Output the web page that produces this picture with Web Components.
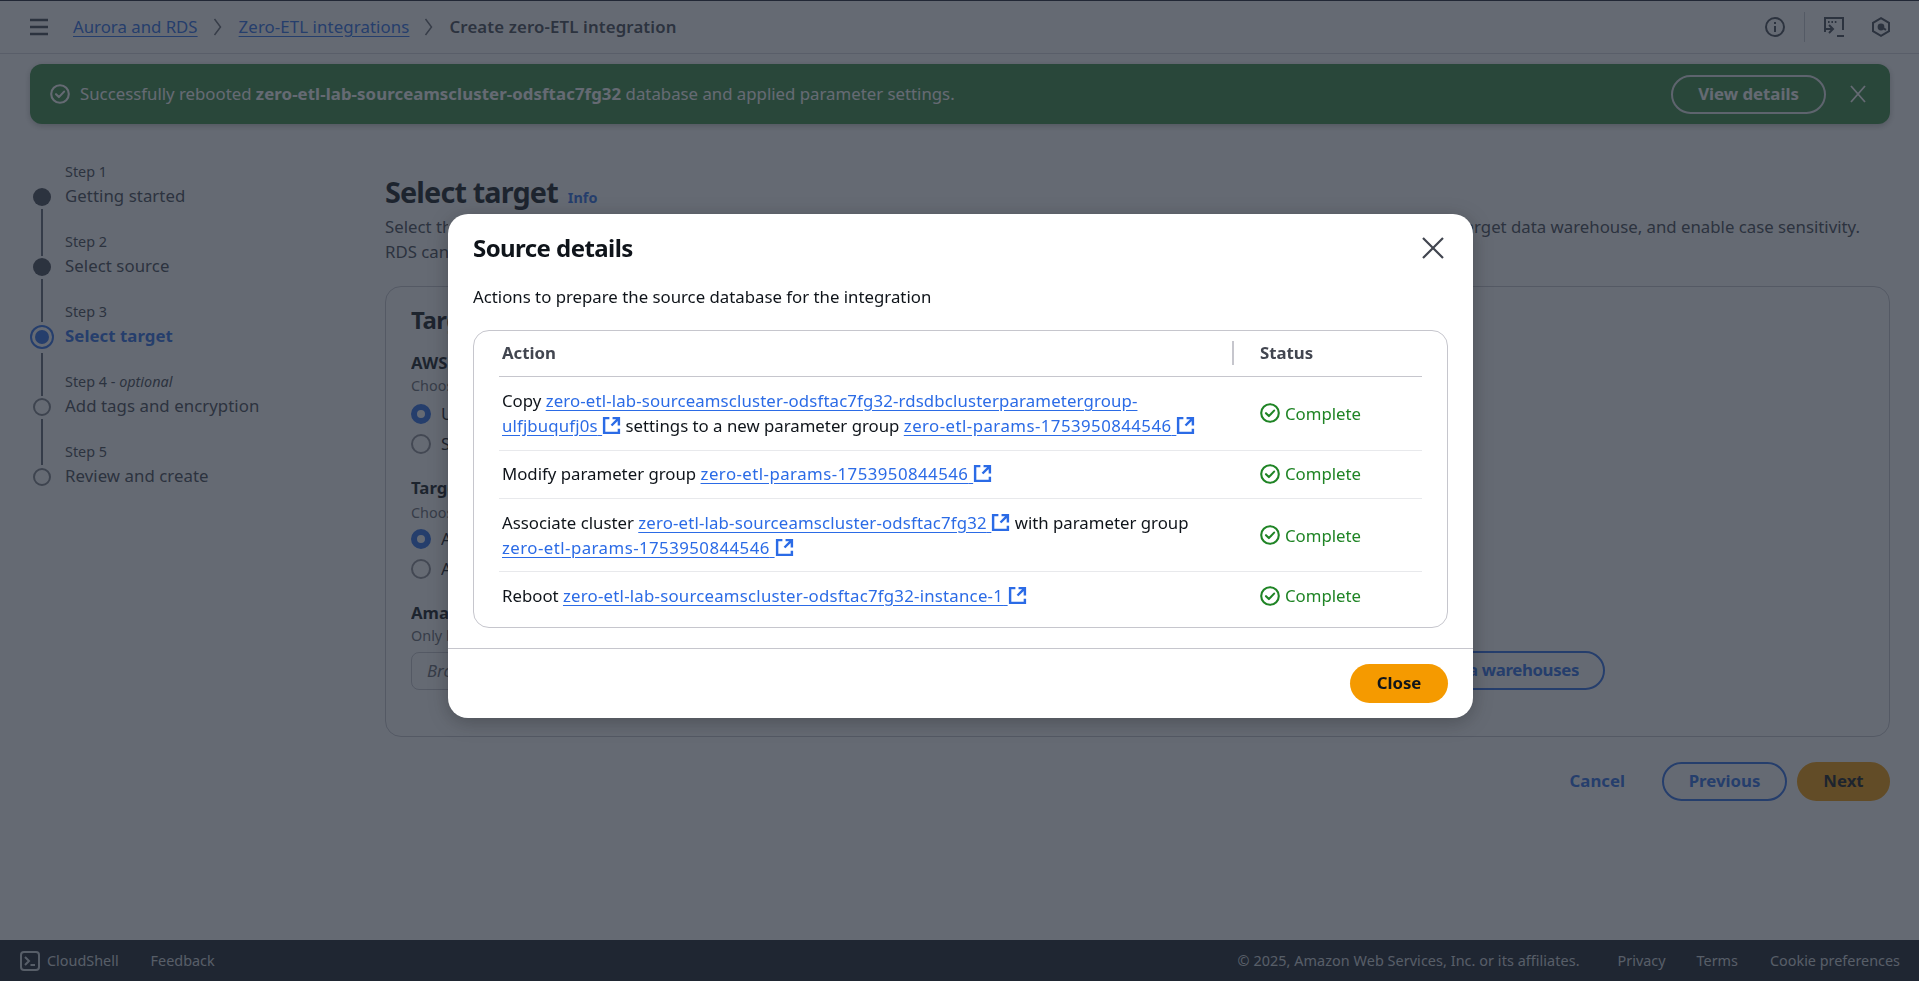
<!DOCTYPE html>
<html lang="en"><head><meta charset="utf-8"><title>Create zero-ETL integration</title>
<style>
html,body{margin:0;height:100%;overflow:hidden;background:#fff;font:16.8px/24px "Noto Sans","Liberation Sans",sans-serif;color:#0f141a}
body{display:flex;flex-direction:column;height:981px}
</style></head><body>
<top-bar></top-bar>
<flash-bar></flash-bar>
<page-main></page-main>
<page-footer></page-footer>
<modal-layer>
 <source-modal>
  <src-row first>Copy <ext-link style="letter-spacing:.14px">zero-etl-lab-sourceamscluster-odsftac7fg32-rdsdbclusterparametergroup-ulfjbuqufj0s</ext-link> settings to a new parameter group <ext-link style="letter-spacing:.46px">zero-etl-params-1753950844546</ext-link></src-row>
  <src-row second>Modify parameter group <ext-link style="letter-spacing:.46px">zero-etl-params-1753950844546</ext-link></src-row>
  <src-row>Associate cluster <ext-link style="letter-spacing:.17px">zero-etl-lab-sourceamscluster-odsftac7fg32</ext-link> with parameter group <ext-link style="letter-spacing:.46px">zero-etl-params-1753950844546</ext-link></src-row>
  <src-row last>Reboot <ext-link style="letter-spacing:.23px">zero-etl-lab-sourceamscluster-odsftac7fg32-instance-1</ext-link></src-row>
 </source-modal>
</modal-layer>
<script>
const LINK='#2b6be6';
function el(name,html){customElements.define(name,class extends HTMLElement{constructor(){super();this.attachShadow({mode:'open'}).innerHTML=html}})}
const check=(c,s=20)=>`<svg width="${s}" height="${s}" viewBox="0 0 20 20" fill="none" stroke="${c}" stroke-width="2.1" style="display:block;flex:none"><circle cx="10" cy="10" r="8.8"/><path d="M6 10.200l2.900 2.900 5.200-5.500" stroke-linecap="round" stroke-linejoin="round"/></svg>`;

el('top-bar',`<style>
:host{display:flex;align-items:center;height:52px;border-top:1px solid #1b2130;border-bottom:1px solid #d5d8dd;padding-left:30px;padding-right:28px;flex:none}
a{color:${LINK};text-decoration:underline;text-underline-offset:3px}
.ch{display:block;flex:none;margin:0 15px}
b{color:#424650;font-weight:600;letter-spacing:.14px}
.sp{flex:1}
svg{display:block;flex:none}
.d{width:1px;height:30px;background:#c6c9cf;margin:0 19px 0 19px}
</style>
<svg width="18" height="18" viewBox="0 0 18 18" stroke="#424650" stroke-width="2.400" style="margin-right:25px"><path d="M0 2h18M0 9h18M0 16h18"/></svg>
<a>Aurora and RDS</a>
<svg class="ch" width="10" height="20" viewBox="0 0 10 20" fill="none" stroke="#656871" stroke-width="1.500" style="margin-right:16px"><path d="M1.500 2l6 8-6 8"/></svg>
<a style="letter-spacing:.11px">Zero-ETL integrations</a>
<svg class="ch" width="10" height="20" viewBox="0 0 10 20" fill="none" stroke="#656871" stroke-width="1.500"><path d="M1.500 2l6 8-6 8"/></svg>
<b>Create zero-ETL integration</b>
<span class="sp"></span>
<svg width="20" height="20" viewBox="0 0 20 20" fill="none" stroke="#424650" stroke-width="2"><circle cx="10" cy="10" r="9"/><path d="M10 9v6M10 5v2"/></svg>
<span class="d"></span>
<svg width="21" height="21" viewBox="0 0 21 21" fill="none" stroke="#424650" stroke-width="2"><path d="M1 15V1h18v12"/><path d="M4 5h1.600M7.400 5H9M10.800 5h1.600" stroke-width="1.800"/><path d="M5 8l4 4-4 4M1 12h8M13 19h7"/></svg>
<svg width="20" height="20" viewBox="0 0 20 20" fill="none" stroke="#424650" stroke-width="2" style="margin-left:26px"><path d="M10 1.200l8 4.600v8.400l-8 4.600-8-4.600V5.800z"/><circle cx="10" cy="10" r="3.400" fill="#424650" stroke="none"/><path d="M10 10l5 2.800"/></svg>`);

el('flash-bar',`<style>
:host{display:flex;align-items:center;height:60px;margin:10px 29px 0 30px;background:#378941;border-radius:12px;color:#fff;flex:none;padding:0 20px 0 20px;box-shadow:0 2px 6px rgba(0,0,0,.25)}
span{margin-left:10px;flex:1;white-space:nowrap}
b{font-weight:700;letter-spacing:.09px}
.btn{box-sizing:border-box;width:155px;height:39px;border:2px solid #e8eaed;border-radius:20px;text-align:center;line-height:34px;font-weight:700;margin:0 23px 0 0;flex:none}
</style>${check('#fff',20)}<span>Successfully rebooted <b>zero-etl-lab-sourceamscluster-odsftac7fg32</b> database and applied parameter settings.</span>
<div class="btn">View details</div>
<svg width="18" height="18" viewBox="0 0 18 18" stroke="#fff" stroke-width="1.800" style="display:block;margin-right:3px;flex:none"><path d="M2 1l14 16M16 1L2 17"/></svg>`);

el('wiz-step',`<style>
:host{display:grid;grid-template-columns:32px 1fr;grid-template-rows:22px 24px;align-content:start;height:70px;position:relative;color:#424650}
.l{grid-column:2;height:20px;line-height:20px;font-size:14.4px;color:#424650}
.m{grid-column:1;display:flex;align-items:center;height:24px}
.m i{display:block;box-sizing:border-box;width:18px;height:18px;border-radius:50%;background:#424650;flex:none;margin-top:2px}
.n{grid-column:2;height:24px;line-height:24px;letter-spacing:.06px}
:host(.next) .m i{background:transparent;border:2px solid #7d8088}
:host(.active) .n{color:${LINK};font-weight:700}
:host(.active) .m i{background:${LINK};width:14px;height:14px;margin-left:2px;box-shadow:0 0 0 3px #fff,0 0 0 5px ${LINK}}
:host(:not(.last))::after{content:"";position:absolute;left:8px;top:47px;width:2px;height:47px;background:#5f6672}
:host(.short)::after{height:43px}
:host(.active)::after{top:51px;height:43px}
:host(.next)::after{height:46px}
</style><div class="l"><slot name="l"></slot></div><div class="m"><i></i></div><div class="n"><slot></slot></div>`);

el('radio-row',`<style>
:host{display:flex;align-items:center;height:20px;gap:10px;line-height:20px}
i{display:block;box-sizing:border-box;width:20px;height:20px;border-radius:50%;border:2px solid #8c8c94;flex:none}
:host([on]) i{border:6px solid ${LINK}}
span{display:block;width:7px;overflow:hidden;white-space:nowrap;color:#0f141a}
</style><i></i><span><slot></slot></span>`);

el('target-form',`<style>
:host{display:block;box-sizing:border-box;height:451px;margin-top:22px;border:1px solid #c6c6cd;border-radius:16px;padding:19px 25px 0 25px}
.cl{width:37px;overflow:hidden;white-space:nowrap}
h2{margin:0;font-size:24px;line-height:28px;font-weight:700;letter-spacing:-.5px}
.lb{font-weight:700;line-height:20px;height:20px}
.hp{font-size:14.4px;color:#656871;line-height:20px;height:20px;margin-top:3px}
radio-row{margin-top:10px}
.first{margin-top:8px}
.row{display:flex;margin-top:5px;gap:16px;align-items:center;width:1194px}
.in{flex:1;height:38px;box-sizing:border-box;border:1px solid #c6c6cd;border-radius:8px;padding:0 15px;line-height:36px;font-style:italic;color:#656871}
.in span{display:block;width:21px;overflow:hidden;white-space:nowrap}
.bt{box-sizing:border-box;height:39px;width:180px;border:2px solid ${LINK};border-radius:20px;line-height:34px;font-weight:700;color:${LINK};padding-right:24px;flex:none;display:flex;justify-content:flex-end;letter-spacing:-.35px}
.bt span{display:flex;justify-content:flex-end;width:106px;overflow:hidden;white-space:nowrap;flex:none}
</style>
<h2 class="cl">Target details</h2>
<div class="lb cl" style="margin-top:19px">AWS account</div>
<div class="hp cl">Choose account</div>
<radio-row on class="first">Use</radio-row>
<radio-row>Specify</radio-row>
<div class="lb cl" style="margin-top:24px">Target type</div>
<div class="hp cl" style="margin-top:5px">Choose type</div>
<radio-row on style="margin-top:6px">Amazon</radio-row>
<radio-row>Amazon</radio-row>
<div class="lb cl" style="margin-top:24px">Amazon Redshift</div>
<div class="hp cl">Only listed</div>
<div class="row"><div class="in"><span>Browse</span></div><div class="bt"><span><em style="font-style:normal;flex:none">data warehouses</em></span></div></div>`);

el('page-main',`<style>
:host{display:grid;grid-template-columns:385px 1fr;padding-right:29px;flex:1;min-height:0}
nav{padding:38px 0 0 33px}
h1{margin:50px 0 0;font-size:28.8px;line-height:36px;font-weight:700;color:#0f141a;display:flex;align-items:baseline;gap:10px;letter-spacing:-.85px}
h1 small{font-size:14.4px;line-height:14px;font-weight:700;color:${LINK};letter-spacing:0}
.ln{display:flex;justify-content:space-between;line-height:25px;height:25px;color:#424650;white-space:nowrap;padding-right:30px}
.ln span{display:block;width:63px;overflow:hidden}
.acts{display:flex;justify-content:flex-end;align-items:center;margin-top:25px}
.c{font-weight:700;color:${LINK};margin:0 37px 2px 0;line-height:22px}
.b{box-sizing:border-box;height:39px;border-radius:20px;line-height:34px;font-weight:700;text-align:center}
.p{width:125px;border:2px solid ${LINK};color:${LINK};margin-right:10px}
.n{width:93px;border:2px solid #f59a00;background:#f59a00;color:#0f141a}
</style>
<nav>
<wiz-step><span slot="l">Step 1</span>Getting started</wiz-step>
<wiz-step class="short"><span slot="l">Step 2</span>Select source</wiz-step>
<wiz-step class="active"><span slot="l">Step 3</span>Select target</wiz-step>
<wiz-step class="next"><span slot="l">Step 4 - <i>optional</i></span>Add tags and encryption</wiz-step>
<wiz-step class="next last"><span slot="l">Step 5</span>Review and create</wiz-step>
</nav>
<section>
<h1>Select target <small>Info</small></h1>
<div class="ln" style="margin-top:4px"><span>Select the</span><div>target data warehouse, and enable case sensitivity.</div></div>
<div class="ln"><span>RDS can fix</span></div>
<target-form></target-form>
<div class="acts"><span class="c">Cancel</span><div class="b p">Previous</div><div class="b n">Next</div></div>
</section>`);

el('page-footer',`<style>
:host{display:flex;align-items:center;height:41px;background:#161d26;color:#d1d5db;font-size:14.4px;padding:0 19px 0 20px;flex:none}
svg{display:block;margin-right:7px}
.f{margin-left:32px}
.sp{flex:1}
.r{margin-left:31px}
.cp{letter-spacing:.06px}
</style>
<svg width="20" height="20" viewBox="0 0 20 20" fill="none" stroke="#d1d5db" stroke-width="2"><rect x="1" y="1" width="18" height="18" rx="3"/><path d="M5 6l4 4-4 4M10.500 14H15"/></svg>
<span>CloudShell</span><span class="f">Feedback</span><span class="sp"></span>
<span class="cp">© 2025, Amazon Web Services, Inc. or its affiliates.</span><span class="r" style="margin-left:38px">Privacy</span><span class="r">Terms</span><span class="r" style="margin-left:32px">Cookie preferences</span>`);

el('modal-layer',`<style>
:host{position:fixed;inset:0;background:rgba(35,43,55,.7);display:flex;justify-content:flex-start;align-items:flex-start;padding:214px 0 0 448px;box-sizing:border-box;z-index:10}
</style><slot></slot>`);

el('source-modal',`<style>
:host{display:flex;flex-direction:column;box-sizing:border-box;width:1025px;height:504px;background:#fff;border-radius:20px;color:#0f141a;box-shadow:0 4px 20px rgba(0,0,0,.25)}
header{display:flex;justify-content:space-between;align-items:center;height:30px;margin:19px 29px 0 25px}
h2{margin:0;font-size:24px;line-height:30px;font-weight:700;letter-spacing:-.57px}
.d{margin:22px 25px 0;line-height:24px}
.t{margin:21px 25px 0;box-sizing:border-box;height:298px;border:1px solid #c6c6cd;border-radius:16px;padding:0 25px}
.h{display:grid;grid-template-columns:761px 1fr;height:46px;border-bottom:1px solid #c6c6cd;font-weight:700;color:#424650;align-items:center;padding-bottom:2px;box-sizing:border-box}
.h span:first-child{padding-left:3px;position:relative}
.h span:first-child::after{content:"";position:absolute;right:26px;top:0;bottom:0;width:2px;background:#c6c6cd}
footer{margin-top:20px;border-top:1px solid #c6c6cd;display:flex;justify-content:flex-end;padding:15px 25px 0}
.b{box-sizing:border-box;width:98px;height:39px;border-radius:20px;background:#f59a00;color:#0f141a;font-weight:700;text-align:center;line-height:38px}
</style>
<header><h2>Source details</h2><svg width="22" height="22" viewBox="0 0 22 22" stroke="#424650" stroke-width="2.200" style="display:block"><path d="M1 1l20 20M21 1L1 21"/></svg></header>
<div class="d">Actions to prepare the source database for the integration</div>
<div class="t"><div class="h"><span>Action</span><span>Status</span></div><slot></slot></div>
<footer><div class="b">Close</div></footer>`);

el('src-row',`<style>
:host{display:grid;grid-template-columns:758px 1fr;padding:11px 0 11px 3px;align-items:center;line-height:25px;border-bottom:1px solid #e8e9ec}
:host([first]){padding-top:11px;padding-bottom:12px}
:host([second]){padding-top:10px;padding-bottom:12px}
:host([last]){border-bottom:0}
.a{width:708px}
.s{display:flex;align-items:center;gap:5px;color:#1f8425}
</style><div class="a"><slot></slot></div><div class="s">${check('#1f8425')}Complete</div>`);

el('ext-link',`<style>
:host{display:inline}
a{color:${LINK};text-decoration:underline;text-underline-offset:3px}
svg{vertical-align:-3px}
</style><a><slot></slot>&#32;</a><svg width="19" height="19" viewBox="0 0 18 18" fill="none" stroke="${LINK}" stroke-width="2.300"><path d="M16 9V2H10M16 2L9 9M7 2H2v14h14v-4"/></svg>`);
</script>
</body></html>
